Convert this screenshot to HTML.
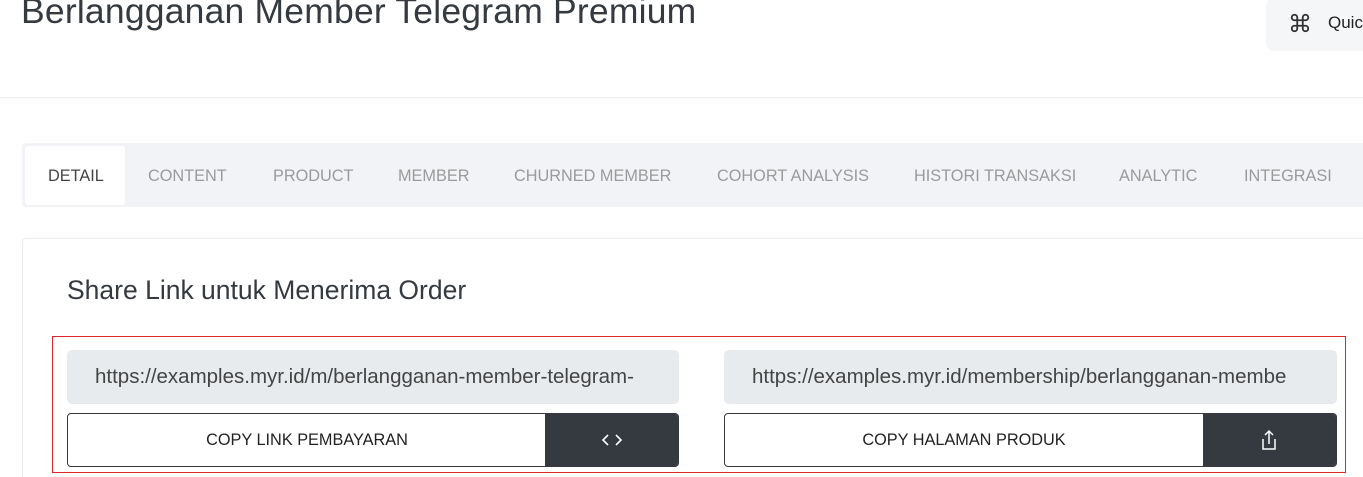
<!DOCTYPE html>
<html><head><style>
html,body{margin:0;width:1363px;height:477px;overflow:hidden}
body{background:#fff;font-family:"Liberation Sans",sans-serif;position:relative}
.a{position:absolute}
.title{left:21px;top:-9px;font-size:35.5px;color:#343a40;white-space:nowrap;letter-spacing:0.2px}
.quick{left:1266px;top:-2px;width:97px;height:53px;background:#f5f6f8;border-radius:8px 0 0 8px;overflow:hidden}
.quick span{position:absolute;left:62px;top:15px;font-size:17px;color:#222;white-space:nowrap}
.hr{left:0;top:97px;width:1363px;height:1px;background:#ececec}
.tabs{left:22px;top:143px;width:1341px;height:64px;background:#f2f3f6;border-radius:4px 0 0 4px}
.tab{position:absolute;top:24px;font-size:16.3px;color:#9a9a9a;white-space:nowrap}
.active{position:absolute;left:3px;top:3px;width:100px;height:59px;background:#fff;border-radius:3px}
.card{left:22px;top:238px;width:1341px;height:239px;border-top:1px solid #ececec;border-left:1px solid #ececec;border-radius:4px 0 0 0;box-sizing:border-box}
.h{left:67px;top:275px;font-size:26.5px;color:#343a40}
.red{left:52px;top:336px;width:1292px;height:135px;border:1.5px solid #e0242c}
.inp{height:54px;background:#e8ebee;border-radius:5px;font-size:20.5px;color:#444;line-height:54px;box-sizing:border-box}
.inp div{position:absolute;left:28px;right:20px;top:0;white-space:nowrap;overflow:hidden}
.btn{height:52px;border:1px solid #343a40;border-radius:4px;overflow:hidden;background:#fff}
.btn .t{position:absolute;left:0;top:0;height:52px;line-height:52px;text-align:center;font-size:16.3px;color:#222}
.btn .d{position:absolute;right:0;top:0;width:133px;height:52px;background:#343a40}
</style></head><body>
<div class="a title">Berlangganan Member Telegram Premium</div>
<div class="a quick"><svg style="position:absolute;left:23px;top:14px" width="22" height="22" viewBox="0 0 24 24" fill="none" stroke="#333" stroke-width="2"><path d="M9 6v12M15 6v12M6 9h12M6 15h12M9 9H6a3 3 0 1 1 3-3M15 9h3a3 3 0 1 0-3-3M9 15H6a3 3 0 1 0 3 3M15 15h3a3 3 0 1 1-3 3"/></svg><span>Quick</span></div>
<div class="a hr"></div>
<div class="a tabs"><div class="active"></div>
<div class="tab" style="left:26px;color:#444">DETAIL</div>
<div class="tab" style="left:126px">CONTENT</div>
<div class="tab" style="left:251px">PRODUCT</div>
<div class="tab" style="left:376px">MEMBER</div>
<div class="tab" style="left:492px">CHURNED MEMBER</div>
<div class="tab" style="left:695px">COHORT ANALYSIS</div>
<div class="tab" style="left:892px">HISTORI TRANSAKSI</div>
<div class="tab" style="left:1097px">ANALYTIC</div>
<div class="tab" style="left:1222px">INTEGRASI</div>
</div>
<div class="a card"></div>
<div class="a h">Share Link untuk Menerima Order</div>
<div class="a red"></div>
<div class="a inp" style="left:67px;top:350px;width:612px"><div>https://examples.myr.id/m/berlangganan-member-telegram-</div></div>
<div class="a inp" style="left:724px;top:350px;width:613px"><div>https://examples.myr.id/membership/berlangganan-membe</div></div>
<div class="a btn" style="left:67px;top:413px;width:610px"><div class="t" style="width:478px">COPY LINK PEMBAYARAN</div><div class="d"><svg style="position:absolute;left:55px;top:17px" width="24" height="18" viewBox="0 0 24 18" fill="none" stroke="#fff" stroke-width="1.6"><path d="M8 4l-5 5 5 5M16 4l5 5-5 5"/></svg></div></div>
<div class="a btn" style="left:724px;top:413px;width:611px"><div class="t" style="width:478px">COPY HALAMAN PRODUK</div><div class="d"><svg style="position:absolute;left:56px;top:14px" width="20" height="24" viewBox="0 0 20 24" fill="none" stroke="#fff" stroke-width="1.5"><path d="M10 16V3M6 7l4-4 4 4M4 11v10h12V11"/></svg></div></div>
</body></html>
